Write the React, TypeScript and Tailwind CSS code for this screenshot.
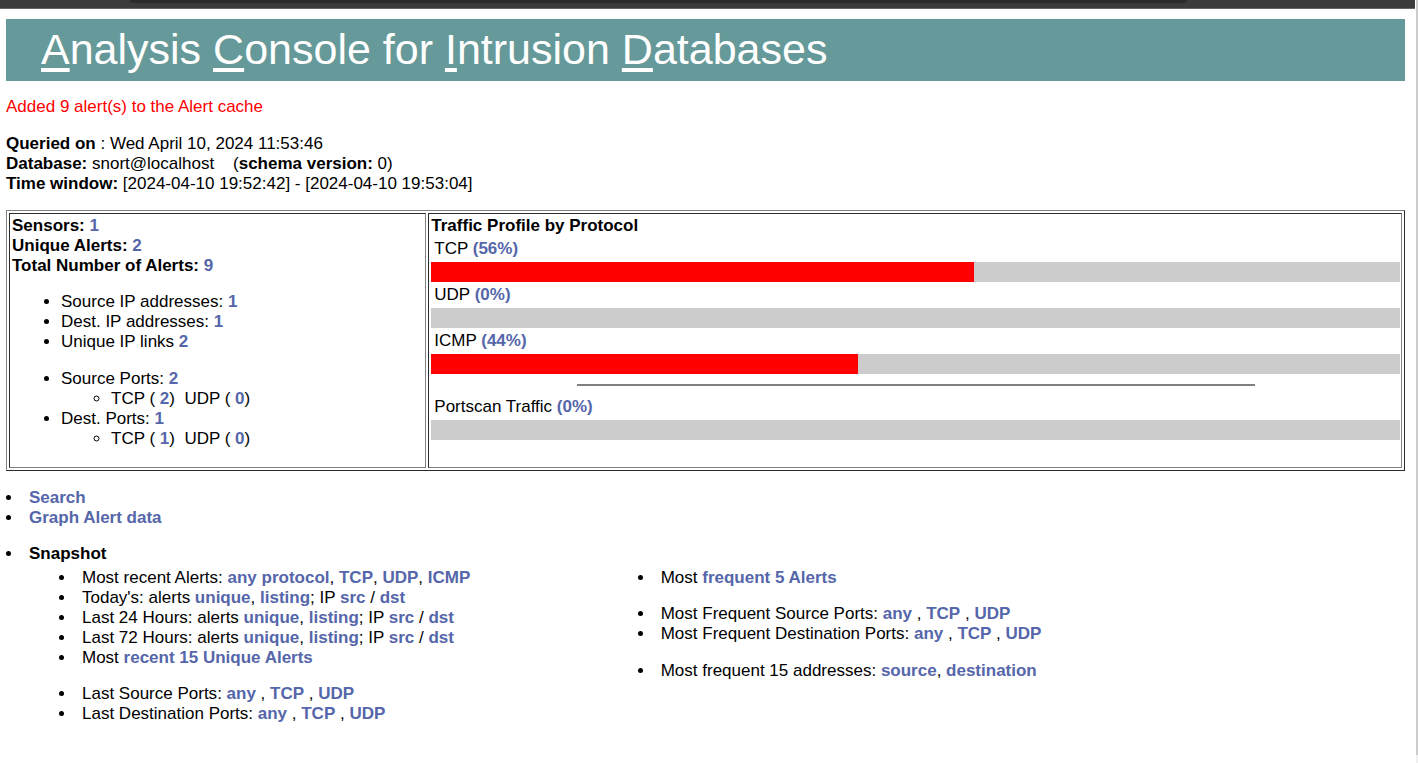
import type { ReactNode } from "react";

function Link({ children }: { children: ReactNode }) {
  return (
    <a href="#" className="font-bold text-[#5566aa] no-underline">
      {children}
    </a>
  );
}

function Initial({ children }: { children: ReactNode }) {
  return <span className="underline decoration-4 underline-offset-4">{children}</span>;
}

function Traffic({ label, percent }: { label: string; percent: number }) {
  return (
    <div className="flex flex-col gap-[3px]">
      <div className="pl-[3px]">
        {label} <Link>({percent}%)</Link>
      </div>
      <div className="h-5 bg-[#cccccc]">
        <div className="h-5 bg-[#ff0000]" style={{ width: `${percent}%` }} />
      </div>
    </div>
  );
}

function PortCounts({ tcp, udp }: { tcp: number; udp: number }) {
  return (
    <ul className="list-[circle] pl-[50px]">
      <li>
        TCP ( <Link>{tcp}</Link>)&nbsp; UDP ( <Link>{udp}</Link>)
      </li>
    </ul>
  );
}

function AlertRow({ period }: { period: string }) {
  return (
    <li className="pl-[6px]">
      {period}: alerts <Link>unique</Link>, <Link>listing</Link>; IP <Link>src</Link> / <Link>dst</Link>
    </li>
  );
}

function PortRow({ label }: { label: string }) {
  return (
    <li className="pl-[6px]">
      {label}: <Link>any</Link> , <Link>TCP</Link> , <Link>UDP</Link>
    </li>
  );
}

const cell =
  "border border-t-[#2c2c2c] border-l-[#2c2c2c] border-r-[#808080] border-b-[#808080] align-top";

export default function App() {
  return (
    <div className="flex min-h-screen bg-white font-['Liberation_Sans',Arial,sans-serif] text-[17px] leading-5 text-black">
      <div className="min-w-0 flex-1">
        <div className="mr-px h-[9px] border-b border-[#666666] bg-[#3b3b3b] pr-[228px] pl-[130px]">
          <div className="h-[3px] rounded-b-lg bg-[#2b2b2b]" />
        </div>

        <div className="pt-[10px] pr-[11px] pl-[6px]">
          <h1 className="bg-[#669999] pr-4 pb-[2px] pl-[35px] text-[43px] leading-[60px] text-white">
            <Initial>A</Initial>nalysis <Initial>C</Initial>onsole for <Initial>I</Initial>ntrusion{" "}
            <Initial>D</Initial>atabases
          </h1>

          <p className="mt-4 text-[#ff0000]">Added 9 alert(s) to the Alert cache</p>

          <div className="mt-[17px]">
            <p>
              <b>Queried on</b> : Wed April 10, 2024 11:53:46
            </p>
            <p>
              <b>Database:</b> snort@localhost &nbsp;&nbsp; (<b>schema version:</b> 0)
            </p>
            <p>
              <b>Time window:</b> [2024-04-10 19:52:42] - [2024-04-10 19:53:04]
            </p>
          </div>

          <table className="mt-4 w-full table-fixed border-separate border-spacing-[2px] border border-t-[#808080] border-r-[#2c2c2c] border-b-[#2c2c2c] border-l-[#808080]">
            <tbody>
              <tr>
                <td className={`${cell} w-[30%] px-[2px] pt-[2px] pb-[18px]`}>
                  <div className="font-bold">
                    <p>
                      Sensors: <Link>1</Link>
                    </p>
                    <p>
                      Unique Alerts: <Link>2</Link>
                    </p>
                    <p>
                      Total Number of Alerts: <Link>9</Link>
                    </p>
                  </div>
                  <ul className="mt-4 list-disc pl-[49px]">
                    <li>
                      Source IP addresses: <Link>1</Link>
                    </li>
                    <li>
                      Dest. IP addresses: <Link>1</Link>
                    </li>
                    <li>
                      Unique IP links <Link>2</Link>
                    </li>
                  </ul>
                  <ul className="mt-[17px] list-disc pl-[49px]">
                    <li>
                      Source Ports: <Link>2</Link>
                      <PortCounts tcp={2} udp={0} />
                    </li>
                    <li>
                      Dest. Ports: <Link>1</Link>
                      <PortCounts tcp={1} udp={0} />
                    </li>
                  </ul>
                </td>
                <td className={`${cell} pt-[2px] pr-px pl-[2px]`}>
                  <p className="font-bold">Traffic Profile by Protocol</p>
                  <div className="mt-[3px] flex flex-col gap-[3px]">
                    <Traffic label="TCP" percent={56} />
                    <Traffic label="UDP" percent={0} />
                    <Traffic label="ICMP" percent={44} />
                  </div>
                  <hr className="mx-auto mt-[10px] mb-[11px] w-[70%] border-t-2 border-[#808080]" />
                  <Traffic label="Portscan Traffic" percent={0} />
                </td>
              </tr>
            </tbody>
          </table>

          <ul className="mt-[17px] list-disc pl-[17px]">
            <li className="pl-[6px]">
              <Link>Search</Link>
            </li>
            <li className="pl-[6px]">
              <Link>Graph Alert data</Link>
            </li>
            <li className="mt-4 pl-[6px]">
              <b>Snapshot</b>
              <div className="mt-1 grid grid-cols-[41fr_55fr] pl-[21px]">
                <div>
                  <ul className="list-disc pl-[26px]">
                    <li className="pl-[6px]">
                      Most recent Alerts: <Link>any protocol</Link>, <Link>TCP</Link>, <Link>UDP</Link>,{" "}
                      <Link>ICMP</Link>
                    </li>
                    <AlertRow period="Today's" />
                    <AlertRow period="Last 24 Hours" />
                    <AlertRow period="Last 72 Hours" />
                    <li className="pl-[6px]">
                      Most <Link>recent 15 Unique Alerts</Link>
                    </li>
                  </ul>
                  <ul className="mt-4 list-disc pl-[26px]">
                    <PortRow label="Last Source Ports" />
                    <PortRow label="Last Destination Ports" />
                  </ul>
                </div>
                <div>
                  <ul className="list-disc pl-[26px]">
                    <li className="pl-[6px]">
                      Most <Link>frequent 5 Alerts</Link>
                    </li>
                  </ul>
                  <ul className="mt-4 list-disc pl-[26px]">
                    <PortRow label="Most Frequent Source Ports" />
                    <PortRow label="Most Frequent Destination Ports" />
                  </ul>
                  <ul className="mt-[17px] list-disc pl-[26px]">
                    <li className="pl-[6px]">
                      Most frequent 15 addresses: <Link>source</Link>, <Link>destination</Link>
                    </li>
                  </ul>
                </div>
              </div>
            </li>
          </ul>
        </div>
      </div>

      <div className="flex w-[2px] flex-col bg-[#f0f0f0] pb-2">
        <div className="flex-1 bg-[#cccccc]" />
      </div>
    </div>
  );
}
